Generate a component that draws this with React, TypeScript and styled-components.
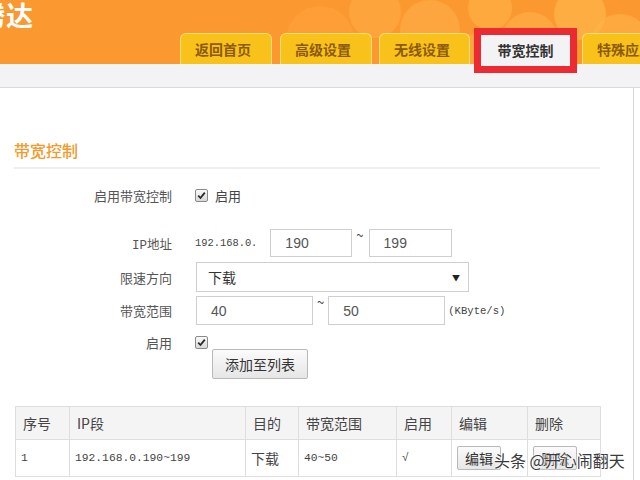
import React from "react";
import styled, { createGlobalStyle } from "styled-components";

const Global = createGlobalStyle`
  html, body { margin: 0; padding: 0; background: #fff; }
  body { width: 640px; height: 480px; overflow: hidden; font-family: "Noto Sans CJK SC", "Liberation Sans", sans-serif; }
`;

const Page = styled.div`
  position: relative;
  width: 640px;
  height: 480px;
  overflow: hidden;
`;

const Header = styled.header`
  position: relative;
  z-index: 2;
  height: 64px;
  background: #fc9830;
  display: flex;
  align-items: flex-end;
`;

const Bubbles = styled.svg`
  position: absolute;
  right: 0;
  top: 0;
  width: 360px;
  height: 64px;
  z-index: 0;
`;

const LogoBox = styled.div`
  position: relative;
  z-index: 1;
  width: 180px;
  height: 64px;
  flex: none;
  overflow: hidden;
`;

const LogoText = styled.span`
  display: block;
  margin: -2px 0 0 -22px;
  font-size: 27px;
  font-weight: 700;
  color: #fff;
  letter-spacing: 1px;
  line-height: 34px;
  white-space: nowrap;
`;

const Tabs = styled.nav`
  position: relative;
  z-index: 1;
  display: flex;
  align-items: flex-end;
  height: 64px;
  overflow: visible;
`;

const Tab = styled.div<{ $w: number; $ml: number; $active?: boolean }>`
  position: relative;
  flex: none;
  width: ${(p) => p.$w}px;
  margin-left: ${(p) => p.$ml}px;
  height: ${(p) => (p.$active ? 30 : 31)}px;
  box-sizing: border-box;
  border: 1px solid ${(p) => (p.$active ? "#f3f3f5" : "#fde07a")};
  border-bottom: none;
  border-radius: 6px 6px 0 0;
  background: ${(p) => (p.$active ? "#f3f3f5" : "#f9c21a")};
  color: ${(p) => (p.$active ? "#333" : "#8b5a0c")};
  font-size: 14px;
  font-weight: 700;
  display: flex;
  align-items: center;
  justify-content: ${(p) => (p.$active ? "center" : "flex-start")};
  padding-left: ${(p) => (p.$active ? 0 : 14)}px;
  white-space: nowrap;
  ${(p) =>
    p.$active &&
    `
    border-radius: 0;
    &::after {
      content: "";
      position: absolute;
      left: -7px; right: -7px; top: -7px; bottom: -9px;
      border: 7px solid #ec2a31;
      pointer-events: none;
    }
  `}
`;

const Strip = styled.div`
  height: 23px;
  background: #f3f3f5;
  border-bottom: 1px solid #d9d9d9;
`;

const Main = styled.main`
  width: 633px;
  height: 392px;
  border-right: 1px solid #d6d6d6;
  box-sizing: content-box;
  padding: 52px 0 0 0;
  position: relative;
`;

const Title = styled.h2`
  margin: 0 0 0 14px;
  font-size: 16px;
  line-height: 20px;
  font-weight: 500;
  color: #f39a2a;
`;

const Divider = styled.div`
  margin: 7px 0 0 14px;
  width: 586px;
  height: 2px;
  background: #eeeeee;
`;

const Form = styled.div`
  display: flex;
  flex-direction: column;
  margin-top: 14px;
`;

const Row = styled.div<{ $h: number; $mt: number }>`
  display: grid;
  grid-template-columns: 172px 1fr;
  column-gap: 23px;
  align-items: center;
  height: ${(p) => p.$h}px;
  margin-top: ${(p) => p.$mt}px;
`;

const Label = styled.div<{ $serif?: boolean }>`
  text-align: right;
  font-size: 13px;
  color: #555;
  white-space: nowrap;
  ${(p) => p.$serif && `font-family: "Liberation Mono", "Noto Sans CJK SC", monospace; font-size: 12.5px;`}
`;

const Controls = styled.div`
  display: flex;
  align-items: center;
  height: 100%;
`;

const BoxWrap = styled.span`
  flex: none;
  width: 13px;
  height: 13px;
  box-sizing: border-box;
  border: 1px solid #8a8a8a;
  border-radius: 2px;
  background: linear-gradient(#fafafa, #d8d8d8);
  display: inline-flex;
  align-items: center;
  justify-content: center;
`;

const CheckText = styled.span`
  margin-left: 7px;
  font-size: 13px;
  color: #444;
`;

const Mono = styled.span<{ $size: number; $ml?: number }>`
  font-family: "Liberation Mono", monospace;
  font-size: ${(p) => p.$size}px;
  color: #444;
  margin-left: ${(p) => p.$ml ?? 0}px;
  white-space: nowrap;
`;

const Input = styled.div<{ $w: number; $ml?: number }>`
  flex: none;
  width: ${(p) => p.$w}px;
  height: 100%;
  box-sizing: border-box;
  border: 1px solid #cfcfcf;
  margin-left: ${(p) => p.$ml ?? 0}px;
  padding-left: 14px;
  display: flex;
  align-items: center;
  font-family: "Liberation Sans", Arial, sans-serif;
  font-size: 14px;
  color: #555;
`;

const Tilde = styled.span`
  align-self: flex-start;
  margin-left: 4px;
  font-size: 13px;
  line-height: 12px;
  color: #444;
`;

const Select = styled.div`
  flex: none;
  width: 273px;
  height: 100%;
  box-sizing: border-box;
  border: 1px solid #cfcfcf;
  margin-left: 1px;
  padding: 0 8px 0 11px;
  display: flex;
  align-items: center;
  justify-content: space-between;
  font-size: 14px;
  color: #333;
`;

const Arrow = styled.span`
  font-size: 8px;
  color: #222;
`;

const Button = styled.div<{ $ml?: number }>`
  flex: none;
  margin-left: ${(p) => p.$ml ?? 0}px;
  box-sizing: border-box;
  border: 1px solid #b9b9b9;
  border-radius: 2px;
  background: linear-gradient(#fbfbfb, #e6e6e6);
  display: flex;
  align-items: center;
  justify-content: center;
  color: #333;
  white-space: nowrap;
`;

const AddButton = styled(Button)`
  width: 96px;
  height: 30px;
  font-size: 14px;
`;

const SmallButton = styled(Button)`
  width: 44px;
  height: 24px;
  font-size: 14px;
`;

const Table = styled.table`
  margin: 27px 0 0 15px;
  border-collapse: collapse;
  table-layout: fixed;
  width: 585px;
`;

const Th = styled.th<{ $w: number }>`
  box-sizing: border-box;
  width: ${(p) => p.$w}px;
  height: 33px;
  border: 1px solid #dedede;
  background: #f4f4f4;
  text-align: left;
  padding: 0 0 0 7px;
  font-size: 14px;
  font-weight: 400;
  color: #444;
`;

const Td = styled.td<{ $mono?: boolean }>`
  height: 36px;
  border: 1px solid #dedede;
  padding: 0 0 0 5px;
  font-size: 14px;
  color: #444;
  white-space: nowrap;
  overflow: visible;
  ${(p) => p.$mono && `font-family: "Liberation Mono", monospace; font-size: 11.3px;`}
`;

const Watermark = styled.div`
  position: absolute;
  left: 494px;
  top: 448px;
  font-size: 16px;
  color: #3a3a3a;
  white-space: nowrap;
  text-shadow: 0 0 2px #fff, 0 0 2px #fff, 0 0 3px #fff;
`;

const Check = () => (
  <BoxWrap>
    <svg width="9" height="9" viewBox="0 0 9 9">
      <path d="M1.2 4.6 L3.5 7 L7.8 1.6" fill="none" stroke="#2a2a2a" strokeWidth="1.8" />
    </svg>
  </BoxWrap>
);

export default function App() {
  return (
    <Page>
      <Global />
      <Header>
        <Bubbles viewBox="0 0 360 64">
          <circle cx="40" cy="40" r="34" fill="#fda43a" opacity="0.6" />
          <circle cx="95" cy="12" r="26" fill="#fdae45" opacity="0.6" />
          <circle cx="150" cy="30" r="30" fill="#fdb04a" opacity="0.55" />
          <circle cx="210" cy="8" r="22" fill="#fdb447" opacity="0.6" />
          <circle cx="250" cy="40" r="28" fill="#feb64c" opacity="0.55" />
          <circle cx="300" cy="14" r="26" fill="#feba4f" opacity="0.6" />
          <circle cx="340" cy="44" r="30" fill="#feb449" opacity="0.6" />
          <circle cx="120" cy="55" r="18" fill="#fda942" opacity="0.5" />
          <circle cx="190" cy="50" r="16" fill="#fdb04a" opacity="0.5" />
        </Bubbles>
        <LogoBox>
          <LogoText>腾达</LogoText>
        </LogoBox>
        <Tabs>
          <Tab $w={92} $ml={0}>返回首页</Tab>
          <Tab $w={92} $ml={8}>高级设置</Tab>
          <Tab $w={91} $ml={7}>无线设置</Tab>
          <Tab $w={91} $ml={10} $active>带宽控制</Tab>
          <Tab $w={80} $ml={11}>特殊应用</Tab>
        </Tabs>
      </Header>
      <Strip />
      <Main>
        <Title>带宽控制</Title>
        <Divider />
        <Form>
          <Row $h={24} $mt={0}>
            <Label>启用带宽控制</Label>
            <Controls>
              <Check />
              <CheckText>启用</CheckText>
            </Controls>
          </Row>
          <Row $h={28} $mt={22}>
            <Label $serif>IP地址</Label>
            <Controls>
              <Mono $size={10.4}>192.168.0.</Mono>
              <Input $w={82} $ml={13}>190</Input>
              <Tilde>~</Tilde>
              <Input $w={83} $ml={5}>199</Input>
            </Controls>
          </Row>
          <Row $h={30} $mt={5}>
            <Label>限速方向</Label>
            <Controls>
              <Select>
                <span>下载</span>
                <Arrow>▼</Arrow>
              </Select>
            </Controls>
          </Row>
          <Row $h={29} $mt={4}>
            <Label>带宽范围</Label>
            <Controls>
              <Input $w={117} $ml={1}>40</Input>
              <Tilde>~</Tilde>
              <Input $w={117} $ml={4}>50</Input>
              <Mono $size={10.6} $ml={3}>(KByte/s)</Mono>
            </Controls>
          </Row>
          <Row $h={16} $mt={8}>
            <Label>启用</Label>
            <Controls>
              <Check />
            </Controls>
          </Row>
          <Row $h={30} $mt={0}>
            <span />
            <Controls>
              <AddButton $ml={17}>添加至列表</AddButton>
            </Controls>
          </Row>
        </Form>
        <Table>
          <thead>
            <tr>
              <Th $w={54}>序号</Th>
              <Th $w={176}>IP段</Th>
              <Th $w={53}>目的</Th>
              <Th $w={98}>带宽范围</Th>
              <Th $w={55}>启用</Th>
              <Th $w={76}>编辑</Th>
              <Th $w={73}>删除</Th>
            </tr>
          </thead>
          <tbody>
            <tr>
              <Td $mono>1</Td>
              <Td $mono>192.168.0.190~199</Td>
              <Td>下载</Td>
              <Td $mono>40~50</Td>
              <Td $mono>√</Td>
              <Td><SmallButton>编辑</SmallButton></Td>
              <Td><SmallButton>删除</SmallButton></Td>
            </tr>
          </tbody>
        </Table>
      </Main>
      <Watermark>头条 @开心闹翻天</Watermark>
    </Page>
  );
}
